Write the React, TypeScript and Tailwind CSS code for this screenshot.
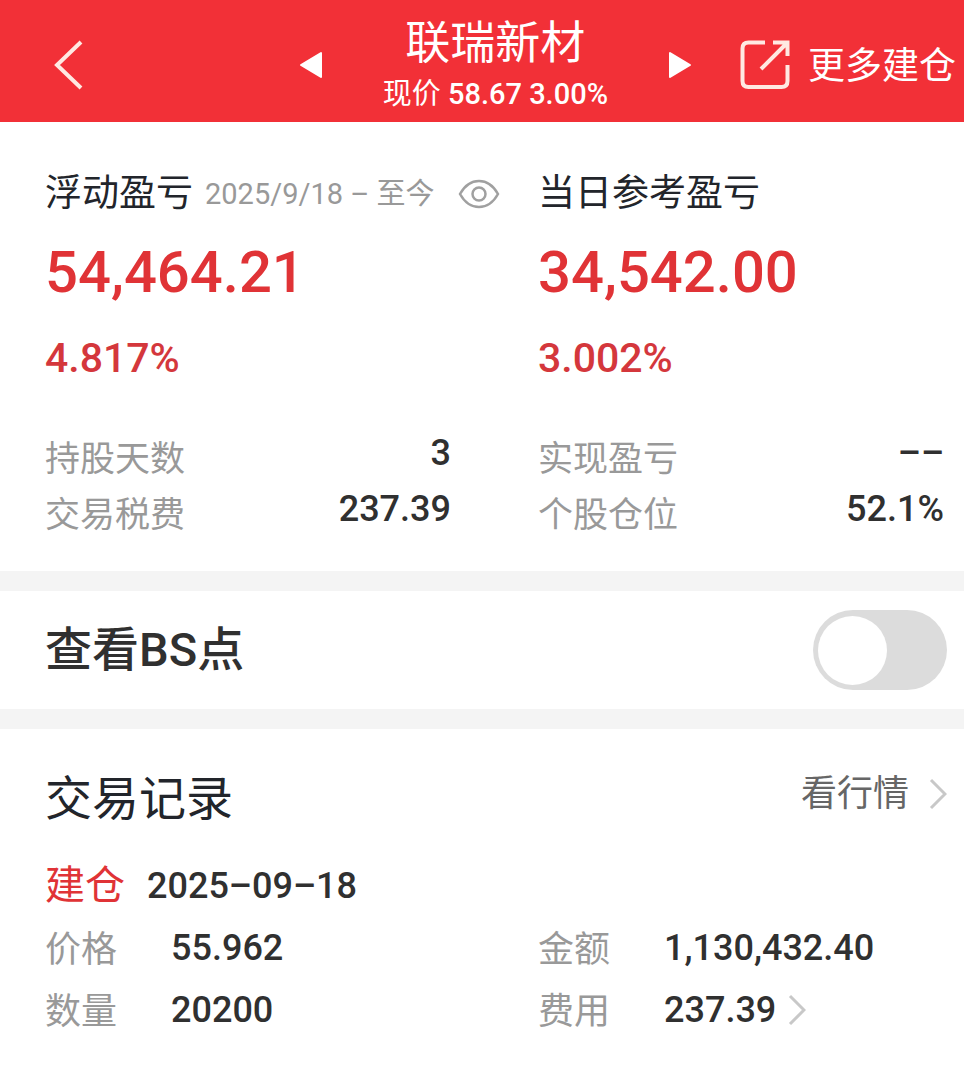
import { useState } from "react";

const records = [
  { label: "价格", value: "55.962" },
  { label: "金额", value: "1,130,432.40" },
  { label: "数量", value: "20200" },
  { label: "费用", value: "237.39", link: true },
];

function Chevron() {
  return (
    <svg viewBox="0 0 18 32" className="h-8 w-[18px] shrink-0" fill="none" stroke="#c8c8c8" strokeWidth="3">
      <path d="M2 2 16 16 2 30" />
    </svg>
  );
}

function Stat({ label, value }: { label: string; value: string }) {
  return (
    <div className="flex h-14 items-start justify-between">
      <dt className="text-[35px] leading-[60px] text-[#999999]">{label}</dt>
      <dd className="text-[36px] leading-[46px] font-medium text-[#303030]">{value}</dd>
    </div>
  );
}

export default function App() {
  const [showPoints, setShowPoints] = useState(false);

  return (
    <main className="min-h-screen bg-white font-[Roboto,'Noto_Sans_CJK_SC',sans-serif] whitespace-nowrap">
      {/* Top bar */}
      <header className="flex h-[122px] items-center bg-[#f23037] pt-2 pr-2 pl-[53px] text-white">
        <button type="button" aria-label="返回">
          <svg viewBox="0 0 30 50" className="h-[50px] w-[30px]" fill="none" stroke="#ffe9e2" strokeWidth="4">
            <path d="M28 2 4 25 28 48" />
          </svg>
        </button>

        <div className="ml-auto flex items-center gap-[60px]">
          <button type="button" aria-label="上一只">
            <svg viewBox="0 0 24 28" className="h-7 w-6" fill="#fff" stroke="#fff" strokeWidth="2" strokeLinejoin="round">
              <path d="M22 2V26L2 14Z" />
            </svg>
          </button>
          <div className="pt-1 text-center">
            <h1 className="text-[45px] leading-[54px]">联瑞新材</h1>
            <p className="text-[29px] leading-[46px]">
              现价 <span className="font-medium">58.67 3.00%</span>
            </p>
          </div>
          <button type="button" aria-label="下一只">
            <svg viewBox="0 0 24 28" className="h-7 w-6" fill="#fff" stroke="#fff" strokeWidth="2" strokeLinejoin="round">
              <path d="M2 2V26L22 14Z" />
            </svg>
          </button>
        </div>

        <button type="button" className="ml-12 flex items-center gap-[18px] text-[37px] leading-[48px]">
          <svg viewBox="0 0 50 50" className="size-[50px]" fill="none" stroke="#ffe9e2" strokeWidth="4">
            <path d="M25 2.5H8.500Q2.500 2.500 2.500 8.500V41Q2.500 47 8.500 47H41.500Q47.500 47 47.500 41V25" />
            <path d="M33 2.500H47.500V16M47 3 21 29" />
          </svg>
          <span className="pt-1">更多建仓</span>
        </button>
      </header>

      {/* Profit summary */}
      <section className="grid grid-cols-2 gap-x-[87px] pt-12 pr-5 pb-[29px] pl-[45px]">
        <div>
          <div className="flex h-12 items-center">
            <h2 className="text-[37px] leading-[48px] text-[#22252b]">浮动盈亏</h2>
            <span className="ml-3 text-[29px] leading-[48px] text-[#999999]">2025/9/18 – 至今</span>
            <button type="button" aria-label="隐藏金额" className="-mr-12 ml-6">
              <svg viewBox="0 0 42 30" className="h-[30px] w-[42px]" fill="none" stroke="#a0a0a0" strokeWidth="2.5">
                <path d="M2 15C7 6 14 2 21 2s14 4 19 13C35 24 28 28 21 28S7 24 2 15Z" />
                <circle cx="21" cy="15" r="6.500" />
              </svg>
            </button>
          </div>
          <p className="mt-[22px] text-[58px] leading-[64px] font-medium text-[#e03336]">54,464.21</p>
          <p className="mt-[30px] text-[41px] leading-[48px] font-medium text-[#d4373c]">4.817%</p>
          <dl className="mt-12">
            <Stat label="持股天数" value="3" />
            <Stat label="交易税费" value="237.39" />
          </dl>
        </div>
        <div>
          <h2 className="text-[37px] leading-[48px] text-[#22252b]">当日参考盈亏</h2>
          <p className="mt-[22px] text-[58px] leading-[64px] font-medium text-[#e03336]">34,542.00</p>
          <p className="mt-[30px] text-[41px] leading-[48px] font-medium text-[#d4373c]">3.002%</p>
          <dl className="mt-12">
            <Stat label="实现盈亏" value="––" />
            <Stat label="个股仓位" value="52.1%" />
          </dl>
        </div>
      </section>

      {/* BS points switch */}
      <section className="flex items-center justify-between border-y-[20px] border-[#f4f4f4] py-[19px] pr-[17px] pl-[45px]">
        <label htmlFor="bs-points" className="text-[47px] leading-[56px] font-medium text-[#303030]">
          查看BS点
        </label>
        <input
          id="bs-points"
          type="checkbox"
          role="switch"
          checked={showPoints}
          onChange={(e) => setShowPoints(e.target.checked)}
          className="flex h-20 w-[134px] cursor-pointer appearance-none items-center rounded-full bg-[#dcdcdc] px-[5px] before:size-[69px] before:rounded-full before:bg-white before:content-[''] checked:justify-end checked:bg-[#f23037]"
        />
      </section>

      {/* Trade records */}
      <section className="pt-[42px] pr-[17px] pb-6 pl-[45px]">
        <div className="flex items-start justify-between">
          <h2 className="text-[47px] leading-[56px] text-[#22252b]">交易记录</h2>
          <a href="#quote" className="flex items-center gap-5 text-[36px] leading-[46px] text-[#666666]">
            看行情
            <Chevron />
          </a>
        </div>

        <div className="mt-7 flex h-[62px] items-center gap-[22px]">
          <span className="text-[40px] leading-[62px] text-[#e03336]">建仓</span>
          <time dateTime="2025-09-18" className="text-[36px] leading-[62px] font-medium text-[#303030]">
            2025–09–18
          </time>
        </div>

        <dl className="grid grid-cols-2 gap-x-[84px]">
          {records.map((r) => (
            <div key={r.label} className="flex h-[62px] items-center">
              <dt className="w-[126px] pt-1 text-[36px] leading-[62px] text-[#999999]">{r.label}</dt>
              <dd className="text-[36px] leading-[62px] font-medium text-[#303030]">
                {r.link ? (
                  <a href="#fees" className="flex items-center gap-3">
                    {r.value}
                    <Chevron />
                  </a>
                ) : (
                  r.value
                )}
              </dd>
            </div>
          ))}
        </dl>
      </section>
    </main>
  );
}
